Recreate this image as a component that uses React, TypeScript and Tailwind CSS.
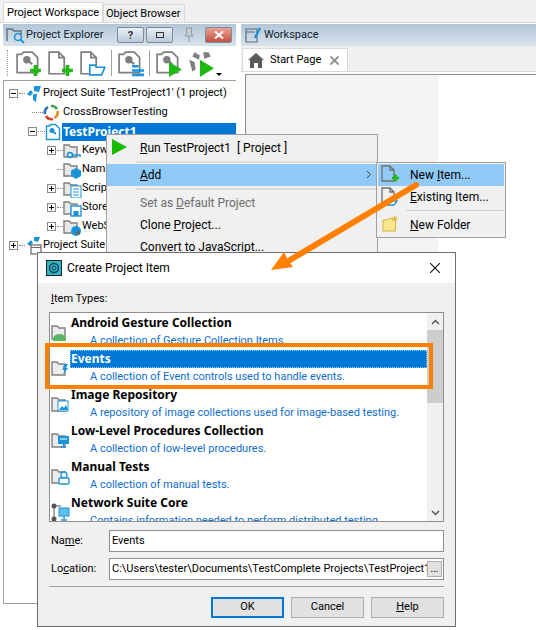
import React from 'react'

const G = '#7f7f7f'
const GREEN = '#1fb80f'
const BLUE = '#1b93d8'
const BOLD = "font-bold font-['Noto_Sans',sans-serif]"

const Doc = ({ x = 0, y = 0, c = G }: { x?: number; y?: number; c?: string }) => (
  <path d={`M${x + 1} ${y + 1}h9l5 5v15h-14z M${x + 10} ${y + 1}v5h5`} fill="none" stroke={c} strokeWidth="1.600" />
)

const Plus = ({ x, y, s = 5 }: { x: number; y: number; s?: number }) => (
  <path d={`M${x - s} ${y}h${s * 2} M${x} ${y - s}v${s * 2}`} stroke={GREEN} strokeWidth="3.400" fill="none" />
)

const Tool = ({ children }: { children: React.ReactNode }) => (
  <svg width="26" height="27" viewBox="0 0 24 25" className="shrink-0">{children}</svg>
)

const SuiteDoc = () => (
  <>
    <path d="M1 4h4l2-2h8l5 5v14h-19z" fill="none" stroke={G} strokeWidth="1.600" />
    <circle cx="10" cy="9" r="3.400" fill={G} />
    <path d="M10 9l5 4" stroke={G} strokeWidth="2" />
  </>
)

const Toolbar = () => (
  <div className="flex items-center h-[34px] pl-[4px]">
    <div className="w-px h-[26px] mr-[8px] border-l border-dotted border-[#999]" />
    <div className="flex gap-[6px] items-center">
      <Tool><SuiteDoc /><Plus x={18} y={19} /></Tool>
      <Tool><Doc y={1} /><Plus x={18} y={19} /></Tool>
      <Tool>
        <Doc y={1} />
        <path d="M9 21v-7h5l1 2h8l-3 7h-11z" fill="#fff" stroke={BLUE} strokeWidth="1.500" />
      </Tool>
    </div>
    <div className="w-px h-[26px] bg-[#a0a0a0] ml-[5px] mr-[6px]" />
    <Tool>
      <SuiteDoc />
      <path d="M13 15h6 M13 19h11 M13 23h11" stroke={BLUE} strokeWidth="2.400" />
    </Tool>
    <div className="w-px h-[26px] bg-[#a0a0a0] ml-[5px] mr-[6px]" />
    <Tool>
      <SuiteDoc />
      <path d="M12 11l12 7-12 7z" fill={GREEN} />
    </Tool>
    <div className="ml-[6px]">
      <Tool>
        <path d="M6 2l5 3-1 4-6-3z M14 2h5l2 4-6 2z M1 9l5 2 1 7-3 2z" fill={G} />
        <path d="M11 9l13 8-13 8z" fill={GREEN} />
      </Tool>
    </div>
    <div className="w-0 h-0 ml-[2px] mt-[22px] border-x-[3px] border-x-transparent border-t-[3px] border-t-black" />
  </div>
)

const Folder = ({ children }: { children?: React.ReactNode }) => (
  <svg width="19" height="18" viewBox="0 0 19 18" className="shrink-0">
    <path d="M1 15v-12h5l2 2h6v10z" fill="#e8e8e8" stroke={G} strokeWidth="1.400" />
    {children}
  </svg>
)

const Expander = ({ minus = false }: { minus?: boolean }) => (
  <span className="relative w-[9px] h-[9px] border border-[#8a8a8a] bg-white shrink-0">
    <span className="absolute left-[1px] top-[3px] w-[5px] h-px bg-black" />
    {!minus && <span className="absolute left-[3px] top-[1px] w-px h-[5px] bg-black" />}
  </span>
)

const TreeChild = ({ label, icon, noBox }: { label: string; icon: React.ReactNode; noBox?: boolean }) => (
  <div className="flex items-center h-[19px] pl-[43px]">
    <span className="w-[9px] flex justify-center shrink-0">{!noBox && <Expander />}</span>
    <span className="w-[6px] ml-px border-t border-dotted border-[#888] shrink-0" />
    {icon}
    <span className="text-[11px] text-black">{label}</span>
  </div>
)

const Tree = () => (
  <div className="relative flex-1 border border-[#a0a0a0] border-r-0 bg-white pt-[3px]">
    <div className="flex items-center h-[19px] pl-[5px]">
      <Expander minus />
      <span className="w-[6px] ml-px border-t border-dotted border-[#888] shrink-0" />
      <svg width="18" height="18" viewBox="0 0 18 18" className="shrink-0">
        <path d="M2 9l4-4 2 3-3 3z M9 1h7l-2 6-5-1z" fill={BLUE} />
        <path d="M8 9h4l-1 8-3-2z" fill={BLUE} />
      </svg>
      <span className="text-[11px] text-black whitespace-nowrap">Project Suite 'TestProject1' (1 project)</span>
    </div>
    <div className="flex items-center h-[19px] pl-[28px]">
      <span className="w-[11px] border-t border-dotted border-[#888] shrink-0" />
      <svg width="17" height="17" viewBox="0 0 17 17" className="shrink-0 mr-[3px]">
        <path d="M8 2a6.500 6.500 0 0 1 6 3" fill="none" stroke="#3fa14a" strokeWidth="2.600" />
        <path d="M14.500 7a6.500 6.500 0 0 1-3 7" fill="none" stroke="#f08a24" strokeWidth="2.600" />
        <path d="M10 15a6.500 6.500 0 0 1-7-3" fill="none" stroke="#d8432f" strokeWidth="2.600" />
        <path d="M2 10a6.500 6.500 0 0 1 3-7" fill="none" stroke="#2a6fb5" strokeWidth="2.600" />
      </svg>
      <span className="text-[11px] text-black">CrossBrowserTesting</span>
    </div>
    <div className="flex items-center h-[19px] pl-[24px]">
      <Expander minus />
      <span className="w-[7px] ml-px border-t border-dotted border-[#888] shrink-0" />
      <svg width="16" height="18" viewBox="0 0 16 18" className="shrink-0">
        <path d="M1.500 3h3l1-1.500h5l4 4v11h-13z" fill="#fff" stroke={BLUE} strokeWidth="1.400" />
        <circle cx="7" cy="7.500" r="2.500" fill={BLUE} />
        <path d="M7 8l4 3" stroke={BLUE} strokeWidth="1.600" />
      </svg>
      <span className={`ml-px w-[175px] h-[18px] bg-[#0078d7] text-white text-[12px] leading-[18px] pl-[1px] ${BOLD}`}>TestProject1</span>
    </div>
    <TreeChild label="Keywo" icon={<Folder><circle cx="7" cy="13" r="2.500" fill="none" stroke={BLUE} strokeWidth="1.600" /><path d="M9 13h8v2" stroke={BLUE} strokeWidth="1.600" fill="none" /></Folder>} />
    <TreeChild noBox label="Name" icon={<Folder><path d="M13 7l5 2.500v5.500l-5 3-5-3v-5.500z" fill={BLUE} /></Folder>} />
    <TreeChild label="Script" icon={<Folder><rect x="8" y="6" width="10" height="12" fill="#fff" stroke={BLUE} /><path d="M10 9h6 M10 12h6 M10 15h6" stroke={BLUE} /></Folder>} />
    <TreeChild label="Store" icon={<Folder><rect x="8" y="7" width="10" height="10" fill="#fff" stroke={BLUE} strokeWidth="1.400" /><rect x="10.500" y="12" width="5" height="5" fill={BLUE} /></Folder>} />
    <TreeChild label="WebS" icon={<Folder><circle cx="13" cy="13" r="5" fill={BLUE} /><circle cx="15" cy="15" r="2" fill="#666" /></Folder>} />
    <div className="flex items-center h-[19px] pl-[5px]">
      <Expander />
      <span className="w-[6px] ml-px border-t border-dotted border-[#888] shrink-0" />
      <svg width="18" height="18" viewBox="0 0 18 18" className="shrink-0">
        <path d="M2 7l4-4 2 3-3 3z M9 0h6l-2 5-4-1z" fill={BLUE} />
        <rect x="6" y="8" width="10" height="9" fill="#fff" stroke="#666" strokeWidth="1.200" />
        <path d="M6 10.500h10" stroke="#666" />
      </svg>
      <span className="text-[11px] text-black whitespace-nowrap">Project Suite</span>
    </div>
  </div>
)

const PanelHeader = ({ children }: { children: React.ReactNode }) => (
  <div className="flex items-center h-[22px] bg-gradient-to-b from-[#b3c6d8] to-[#d8e3ec] text-[11px] text-[#10202e] whitespace-nowrap shrink-0">{children}</div>
)

const HeadBtn = ({ children, red }: { children: React.ReactNode; red?: boolean }) => (
  <div className={`flex items-center justify-center w-[27px] h-[16px] border border-[#7d8c9a] rounded-[2px] ${red ? 'bg-gradient-to-b from-[#eda196] to-[#c14f3f]' : 'bg-gradient-to-b from-[#eaf0f5] to-[#b9cad9]'}`}>
    {children}
  </div>
)

const MenuItem = ({ label, active, gray, arrow }: { label: React.ReactNode; active?: boolean; gray?: boolean; arrow?: boolean }) => (
  <div className={`relative flex items-center h-[22px] pl-[33px] text-[12px] ${active ? 'bg-[#91c9f7]' : ''} ${gray ? 'text-[#6d6d6d]' : 'text-black'}`}>
    <span className="whitespace-nowrap">{label}</span>
    {arrow && (
      <svg width="6" height="9" viewBox="0 0 6 9" className="absolute right-[5px] top-[6px]">
        <path d="M1 1l3.500 3.500L1 8" fill="none" stroke="#444" />
      </svg>
    )}
  </div>
)

const ContextMenu = () => (
  <div className="absolute left-[106px] top-[134px] w-[272px] h-[125px] bg-[#f0f0f0] border border-[#a0a0a0] z-10">
    <div className="flex items-center h-[26px] pl-[33px] text-[12px] text-black relative">
      <svg width="15" height="16" viewBox="0 0 15 16" className="absolute left-[5px] top-[4px]">
        <path d="M0 0l15 8-15 8z" fill="#16bb00" />
      </svg>
      <span className="whitespace-nowrap"><u>R</u>un TestProject1&nbsp; [ Project ]</span>
    </div>
    <div className="h-[2px] ml-[29px] bg-[#dcdcdc] mb-[1px]" />
    <MenuItem active arrow label={<><u>A</u>dd</>} />
    <div className="h-[2px] ml-[29px] bg-[#dcdcdc] mt-[2px] mb-[2px]" />
    <MenuItem gray label={<>Set as <u>D</u>efault Project</>} />
    <MenuItem label={<>Clone <u>P</u>roject...</>} />
    <MenuItem label={<>Convert to JavaScript...</>} />
  </div>
)

const SubMenu = () => (
  <div className="absolute left-[376px] top-[162px] w-[130px] h-[76px] bg-[#f0f0f0] border border-[#a0a0a0] p-[1px] z-10">
    <div className="relative flex items-center h-[22px] pl-[32px] bg-[#91c9f7] text-[12px]">
      <svg width="18" height="20" viewBox="0 0 18 20" className="absolute left-[3px] top-[1px]">
        <path d="M1 1h8l4 4v11h-12z M9 1v4h4" fill="none" stroke="#6f6f6f" strokeWidth="1.300" />
        <path d="M11 13h7 M14.500 9.500v7" stroke={GREEN} strokeWidth="2.400" />
      </svg>
      <span>New <u>I</u>tem...</span>
    </div>
    <div className="relative flex items-center h-[22px] pl-[32px] text-[12px]">
      <svg width="18" height="20" viewBox="0 0 18 20" className="absolute left-[3px] top-[1px]">
        <path d="M1 1h8l4 4v11h-12z M9 1v4h4" fill="none" stroke="#6f6f6f" strokeWidth="1.300" />
        <path d="M4 17l3-3h9l-3 4h-8z" fill="#fff" stroke={BLUE} strokeWidth="1.300" />
      </svg>
      <span><u>E</u>xisting Item...</span>
    </div>
    <div className="h-px ml-[28px] bg-[#d0d0d0] mt-[2px] mb-[3px]" />
    <div className="relative flex items-center h-[22px] pl-[32px] text-[12px]">
      <svg width="18" height="18" viewBox="0 0 18 18" className="absolute left-[4px] top-[1px]">
        <path d="M1 16v-11h5l1.500-1.500h3v1.500h3v11z" fill="#fbe78c" stroke="#d8b13a" />
        <path d="M13 1v5 M10.500 3.500h5 M11 1.500l4 4 M15 1.500l-4 4" stroke="#e0b830" />
      </svg>
      <span><u>N</u>ew Folder</span>
    </div>
  </div>
)

const items = [
  { t: 'Android Gesture Collection', d: 'A collection of Gesture Collection Items.', i: <path d="M2 16a6.500 5 0 0 1 13 0v2h-13z" fill="#5db665" /> },
  { t: 'Events', d: 'A collection of Event controls used to handle events.', i: <path d="M13 5h4l-2 4h2l-5 7 1.500-5h-2z" fill={BLUE} />, sel: true },
  { t: 'Image Repository', d: 'A repository of image collections used for image-based testing.', i: <><rect x="7" y="6" width="10" height="10" fill="#fff" stroke={BLUE} /><path d="M8 15l3-4 2 2 2-3 2 5z" fill={BLUE} /></> },
  { t: 'Low-Level Procedures Collection', d: 'A collection of low-level procedures.', i: <><rect x="7" y="5" width="11" height="8" fill={BLUE} /><path d="M9 8h7" stroke="#fff" /><path d="M10 16h5 M12.500 13v3" stroke={BLUE} strokeWidth="1.400" /></> },
  { t: 'Manual Tests', d: 'A collection of manual tests.', i: <><circle cx="13" cy="8" r="3" fill="#fff" stroke={BLUE} strokeWidth="1.300" /><rect x="8" y="11" width="10" height="6" rx="1" fill="#fff" stroke={BLUE} strokeWidth="1.300" /></> },
  { t: 'Network Suite Core', d: 'Contains information needed to perform distributed testing.', i: <><rect x="8" y="5" width="10" height="8" fill="#5fc0ee" stroke={BLUE} /><path d="M13 13v3 M10 17h6" stroke={BLUE} strokeWidth="1.400" /></>, net: true },
]

const ItemList = () => (
  <div className="relative flex h-[210px] border border-[#8f8f8f] bg-white overflow-hidden">
    <div className="flex-1 min-w-0">
      <div className="h-px" />
      {items.map(it => (
        <div key={it.t} className="relative h-[36px] pl-[20px]">
          <svg width="20" height="20" viewBox="0 0 20 20" className="absolute left-[1px] top-[9px]">
            {it.net ? (
              <>
                <path d="M3 3v13 M3 3h7" stroke="#555" />
                <circle cx="3" cy="3" r="2.500" fill="#555" />
                <circle cx="3" cy="16" r="2.500" fill="#555" />
              </>
            ) : (
              <path d="M1 16v-13h5l2 2h6v11z" fill="#ececec" stroke={G} strokeWidth="1.400" />
            )}
            {it.i}
          </svg>
          <div className={`h-[18px] pl-[1px] text-[12px] leading-[18px] ${BOLD} ${it.sel ? 'bg-[#0078d7] text-white outline-1 -outline-offset-1 outline-dotted outline-[#9cc8ef]' : 'text-black'}`}>{it.t}</div>
          <div className="pl-[20px] text-[11px] leading-[18px] text-[#0f6ecd] whitespace-nowrap">{it.d}</div>
        </div>
      ))}
    </div>
    <div className="flex flex-col w-[16px] bg-[#f0f0f0] shrink-0">
      <div className="flex items-center justify-center h-[17px]">
        <svg width="9" height="6" viewBox="0 0 9 6"><path d="M1 5l3.500-3.500L8 5" fill="none" stroke="#555" strokeWidth="1.500" /></svg>
      </div>
      <div className="h-[73px] bg-[#cdcdcd]" />
      <div className="flex-1" />
      <div className="flex items-center justify-center h-[17px]">
        <svg width="9" height="6" viewBox="0 0 9 6"><path d="M1 1l3.500 3.500L8 1" fill="none" stroke="#555" strokeWidth="1.500" /></svg>
      </div>
    </div>
  </div>
)

const Btn = ({ children, primary }: { children: React.ReactNode; primary?: boolean }) => (
  <div className={`flex items-center justify-center w-[73px] h-[21px] bg-[#e1e1e1] text-[11px] text-black ${primary ? 'border-2 border-[#0078d7]' : 'border border-[#adadad]'}`}>
    {children}
  </div>
)

const Dialog = () => (
  <div className="absolute left-[37px] top-[252px] w-[419px] h-[375px] bg-[#f0f0f0] border border-[#6e6e6e] z-20 flex flex-col">
    <div className="flex items-center h-[30px] bg-white pl-[8px] pr-[15px] shrink-0">
      <svg width="16" height="16" viewBox="0 0 16 16" className="shrink-0">
        <rect x="0.500" y="0.500" width="15" height="15" fill="#2fb5c4" stroke="#222" />
        <circle cx="8" cy="8" r="4.500" fill="none" stroke="#0f3f55" strokeWidth="1.400" />
        <circle cx="8" cy="8" r="2" fill="none" stroke="#0f3f55" />
      </svg>
      <span className="ml-[5px] text-[12px] text-black">Create Project Item</span>
      <svg width="10" height="10" viewBox="0 0 10 10" className="ml-auto">
        <path d="M0 0l10 10 M10 0l-10 10" stroke="#111" strokeWidth="1.100" />
      </svg>
    </div>
    <div className="flex-1 pl-[11px] pr-[11px] pt-[8px]">
      <div className="pl-[2px] text-[11px] leading-[16px] text-black h-[21px]"><u>I</u>tem Types:</div>
      <ItemList />
      <div className="flex items-center h-[22px] mt-[8px]">
        <span className="w-[60px] pl-[2px] text-[11px] text-black">Na<u>m</u>e:</span>
        <div className="flex-1 h-[22px] border border-[#8f8f8f] bg-white pl-[2px] text-[11px] leading-[20px] text-black">Events</div>
      </div>
      <div className="flex items-center h-[22px] mt-[6px]">
        <span className="w-[60px] pl-[2px] text-[11px] text-black">Lo<u>c</u>ation:</span>
        <div className="flex-1 flex items-center h-[22px] border border-[#8f8f8f] bg-white pl-[2px] overflow-hidden">
          <span className="flex-1 min-w-0 overflow-hidden whitespace-nowrap text-[11px] leading-[20px] text-black">C:\Users\tester\Documents\TestComplete Projects\TestProject1\</span>
          <span className="flex items-center justify-center w-[15px] h-[16px] mr-[1px] border border-[#adadad] bg-[#e1e1e1] text-[10px] leading-none text-black shrink-0">...</span>
        </div>
      </div>
      <div className="h-px bg-[#a0a0a0] mt-[6px]" />
      <div className="flex justify-end gap-[7px] mt-[10px]">
        <Btn primary>OK</Btn>
        <Btn>Cancel</Btn>
        <Btn><span><u>H</u>elp</span></Btn>
      </div>
    </div>
  </div>
)

const Overlays = () => (
  <>
    <div className="absolute left-[45px] top-[343px] w-[388px] h-[46px] border-[4px] border-[#ff8000] z-30" />
    <svg width="536" height="630" viewBox="0 0 536 630" className="absolute left-0 top-0 z-30 pointer-events-none">
      <path d="M416 185L290 260" stroke="#ff8000" strokeWidth="6" strokeLinecap="round" fill="none" />
      <path d="M271 270l13-18 4 8 5 7z" fill="#ff8000" />
    </svg>
  </>
)

export default function App() {
  return (
    <div className="relative w-[536px] h-[630px] bg-white overflow-hidden font-['Roboto',sans-serif]">
      <div className="flex items-end h-[23px] bg-[#f0f0f0] border-b border-[#d9d9d9] pl-[3px]">
        <div className="flex items-center h-[20px] pl-[3px] pt-[2px] w-[100px] bg-white border border-b-0 border-[#d9d9d9] text-[11px] text-black whitespace-nowrap">Project Workspace</div>
        <div className="flex items-center h-[18px] pl-[2px] pt-[2px] w-[82px] border border-b-0 border-[#d9d9d9] text-[11px] text-black whitespace-nowrap">Object Browser</div>
      </div>
      <div className="flex h-[580px] mt-px">
        <div className="flex flex-col w-[233px] ml-[3px]">
          <PanelHeader>
            <svg width="20" height="18" viewBox="0 0 20 18" className="ml-[3px] shrink-0">
              <path d="M1 15v-12h5l2 2h7v4" fill="none" stroke="#5d6d7c" strokeWidth="1.400" />
              <circle cx="12" cy="11" r="3.500" fill="none" stroke={BLUE} strokeWidth="1.600" />
              <path d="M14.500 13.500l3.500 3.500" stroke={BLUE} strokeWidth="1.800" />
            </svg>
            <span className="w-[91px] shrink-0">Project Explorer</span>
            <div className="flex gap-[2px] shrink-0">
              <HeadBtn><span className="text-[11px] font-bold leading-none text-[#333]">?</span></HeadBtn>
              <HeadBtn><span className="w-[8px] h-[6px] border border-[#333]" /></HeadBtn>
            </div>
            <svg width="14" height="16" viewBox="0 0 14 16" className="ml-[9px] shrink-0">
              <path d="M4 1h6l-1 5 2 3h-8l2-3z" fill="#c9cfd4" stroke="#8b959d" />
              <path d="M7 9v6" stroke="#8b959d" />
            </svg>
            <div className="ml-[9px] shrink-0">
              <HeadBtn red>
                <svg width="10" height="8" viewBox="0 0 10 8"><path d="M1 0.500l8 7 M9 0.500l-8 7" stroke="#fff" strokeWidth="2" /></svg>
              </HeadBtn>
            </div>
          </PanelHeader>
          <Toolbar />
          <Tree />
        </div>
        <div className="flex flex-col flex-1 ml-[5px] min-w-0">
          <PanelHeader>
            <svg width="16" height="16" viewBox="0 0 16 16" className="ml-[4px] shrink-0">
              <path d="M1 2h11v13h-11z M1 5h9" fill="none" stroke="#5d6d7c" strokeWidth="1.200" />
              <path d="M10 11l5-10" stroke={BLUE} strokeWidth="2.400" />
            </svg>
            <span className="ml-[3px]">Workspace</span>
          </PanelHeader>
          <div className="flex items-end h-[26px] bg-[#f0f0f0] border-b border-[#d9d9d9] shrink-0">
            <div className="flex items-center w-[106px] h-[23px] ml-px bg-white border border-b-0 border-[#d9d9d9] pl-[5px]">
              <svg width="16" height="15" viewBox="0 0 16 15" className="shrink-0">
                <path d="M8 0l8 7h-2v8h-4v-5h-4v5h-4v-8h-2z" fill="#595959" />
              </svg>
              <span className="ml-[6px] w-[60px] shrink-0 text-[11px] text-black">Start Page</span>
              <svg width="9" height="9" viewBox="0 0 9 9" className="shrink-0">
                <path d="M0.500 0.500l8 8 M8.500 0.500l-8 8" stroke="#8a8a8a" strokeWidth="1.800" />
              </svg>
            </div>
          </div>
          <div className="flex flex-1 mt-[2px] ml-[4px] border-t border-l border-[#8f8f8f]">
            <div className="w-[192px] bg-[#f3f3f3]" />
            <div className="flex-1 bg-white" />
          </div>
        </div>
      </div>
      <ContextMenu />
      <SubMenu />
      <Dialog />
      <Overlays />
    </div>
  )
}
